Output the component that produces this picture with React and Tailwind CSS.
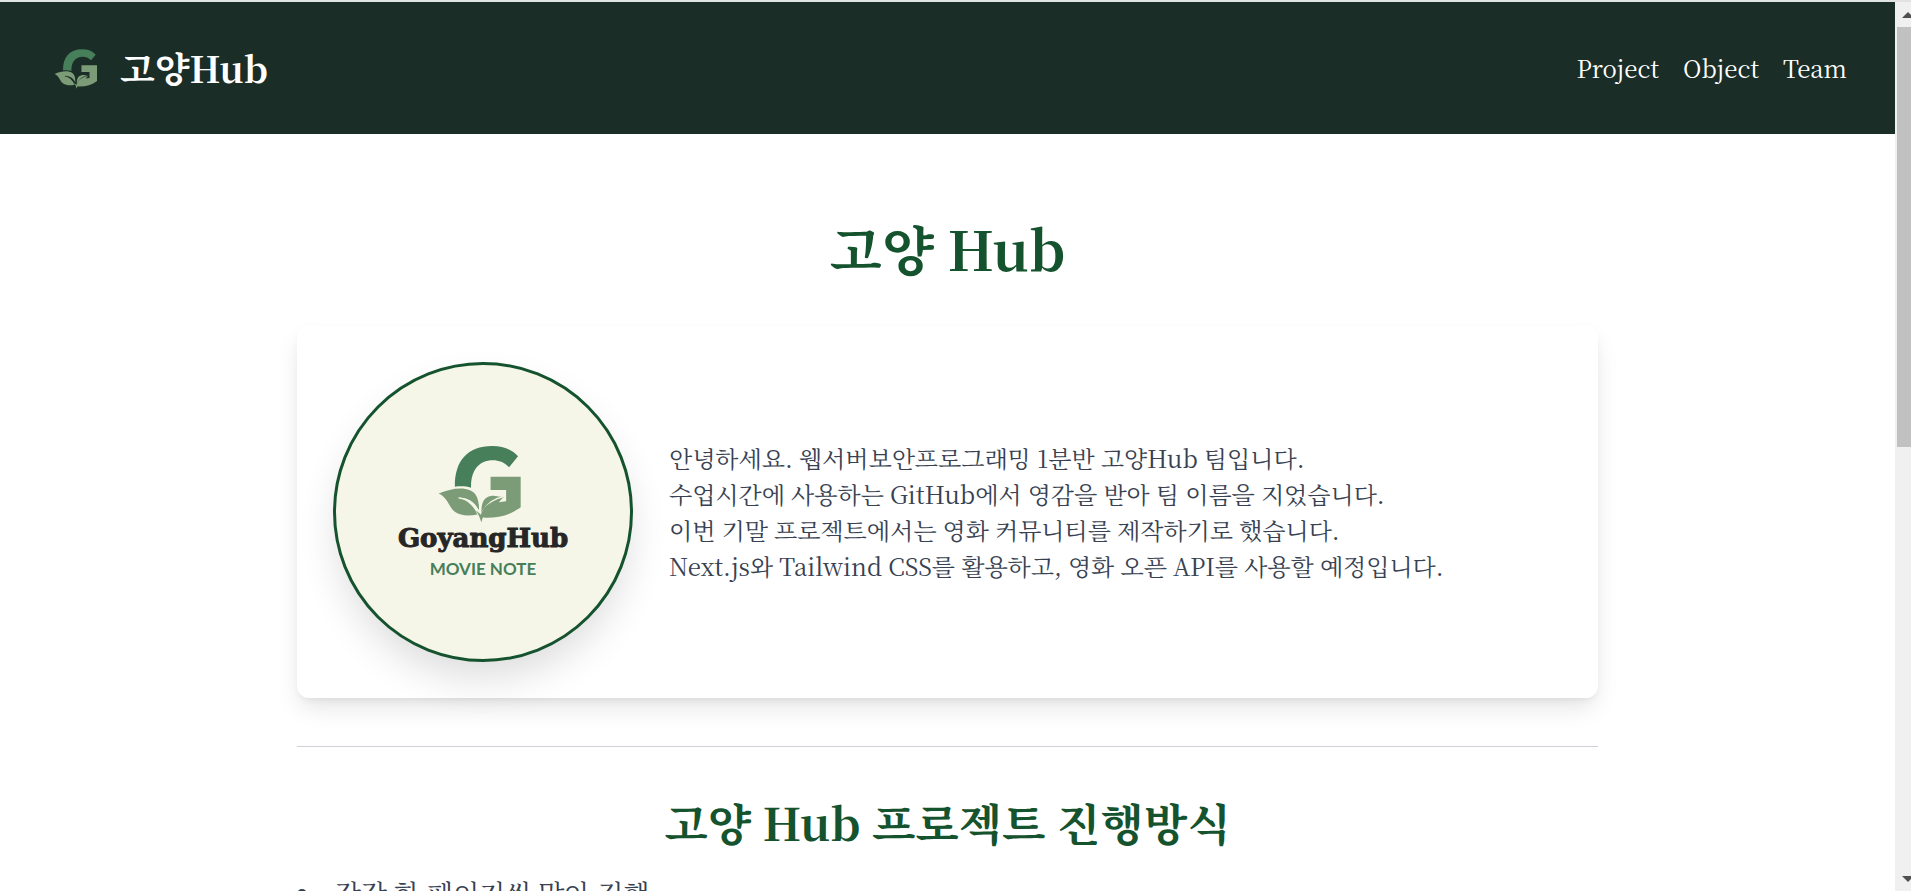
const SERIF =
  "font-['Noto_Serif_KR','Noto_Serif_CJK_KR','Source_Serif_4','Liberation_Serif','Noto_Sans_CJK_KR',serif]";

const introLines = [
  "안녕하세요. 웹서버보안프로그래밍 1분반 고양Hub 팀입니다.",
  "수업시간에 사용하는 GitHub에서 영감을 받아 팀 이름을 지었습니다.",
  "이번 기말 프로젝트에서는 영화 커뮤니티를 제작하기로 했습니다.",
  "Next.js와 Tailwind CSS를 활용하고, 영화 오픈 API를 사용할 예정입니다.",
];

/* The gaps between the leaves take the current text colour. */
function LeafLogo({ className }) {
  return (
    <svg viewBox="174 46 254 234" className={className} aria-hidden="true">
      <path
        fill="#467f5a"
        d="M225 171 C224 95 262 48 338 48 C371 48 397 59 416 79 L389 112 C374 97 358 91 340 91 C297 91 273 122 274 174 C258 169 241 169 225 171 Z"
      />
      <path
        fill="#7c9c77"
        d="M333 141 H424 V233 C396 255 361 265 322 265 C316 265 310 264 306 262 C303 223 310 203 334 199 C348 196 359 203 374 202 C366 206 364 212 358 218 L380 215 V181 H333 Z"
      />
      <path
        fill="#7c9c77"
        d="M176 192 C203 181 231 174 257 178 C286 182 299 202 298 244 C285 216 264 204 236 204 C263 212 282 229 293 255 C270 260 242 260 226 248 C204 231 205 205 176 192 Z"
      />
      <path
        fill="none"
        stroke="currentColor"
        strokeWidth="4"
        d="M236 205 C268 208 289 222 301 256 M372 201 C339 208 318 222 307 254 M301 254 C299 236 302 216 308 206"
      />
      <path fill="#7c9c77" d="M293 246 L304 256 C309 239 320 226 334 219 C320 234 312 256 305 279 C301 266 297 255 289 244 Z" />
    </svg>
  );
}

function Header() {
  return (
    <header className="flex items-center justify-between border-t-2 border-[#dfe3e1] bg-[#1a2d27] px-12 py-10 text-white">
      <a href="#" className="flex items-center gap-4">
        <span className="flex h-[52px] w-14 items-center justify-center pt-0.5 text-[#1a2d27]">
          <LeafLogo className="h-10 w-11" />
        </span>
        <span className="text-4xl font-bold">고양Hub</span>
      </a>
      <nav className="flex gap-6 text-2xl leading-9">
        <a href="#project">Project</a>
        <a href="#object">Object</a>
        <a href="#team">Team</a>
      </nav>
    </header>
  );
}

function TeamEmblem() {
  return (
    <div className="flex size-[300px] shrink-0 flex-col items-center rounded-full border-[3px] border-[#14532d] bg-[#f6f6e8] pt-20 text-[#f6f6e8] shadow-[0_20px_40px_-5px_rgba(0,0,0,0.14)]">
      <LeafLogo className="mr-1.5 h-[78px] w-[84px]" />
      <p className="font-['DejaVu_Serif',serif] text-[26px] leading-[30px] font-bold text-[#262626] [-webkit-text-stroke:1px_#262626]">
        GoyangHub
      </p>
      <p className="font-['Lato',sans-serif] text-[17px] leading-8 font-bold text-[#467f5a]">
        MOVIE NOTE
      </p>
    </div>
  );
}

function ScrollRail() {
  return (
    <div className="flex w-4 shrink-0 flex-col overflow-hidden border-t-2 border-[#e2e2e2] bg-[#f0f0f0] pl-[2px]" aria-hidden="true">
      <svg viewBox="0 0 14 25" className="h-[25px] w-[14px] shrink-0">
        <path fill="#505050" d="M5 16 L11 10 L17 16 Z" />
      </svg>
      <div className="h-[420px] shrink-0 bg-[#c1c1c1]" />
      <svg viewBox="0 0 14 25" className="mt-auto h-[25px] w-[14px] shrink-0">
        <path fill="#505050" d="M5 10 L17 10 L11 16 Z" />
      </svg>
    </div>
  );
}

export default function App() {
  return (
    <div className={`flex h-screen overflow-hidden bg-white ${SERIF}`}>
      <div className="min-w-0 flex-1 overflow-hidden">
        <Header />
        <main className="mx-auto max-w-[1301px] pt-[84px] text-2xl leading-9 text-[#374151]">
          <h1 className="text-center text-[54px] leading-[60px] font-bold text-[#14532d]">고양 Hub</h1>
          <section className="mt-12 flex items-center gap-9 rounded-xl bg-white p-9 shadow-[0_12px_25px_-3px_rgba(0,0,0,0.11),0_4px_8px_-4px_rgba(0,0,0,0.1)]">
            <TeamEmblem />
            <div>
              {introLines.map((line) => (
                <p key={line}>{line}</p>
              ))}
            </div>
          </section>
          <hr className="my-12 border-[#d1d1dc]" />
          <section>
            <h2 className="text-center text-[45px] leading-[54px] font-bold text-[#14532d]">
              고양 Hub 프로젝트 진행방식
            </h2>
            <ul className="mt-[26px] list-inside list-disc text-[27px] leading-9">
              <li>각각 한 페이지씩 맡아 진행</li>
            </ul>
          </section>
        </main>
      </div>
      <ScrollRail />
    </div>
  );
}
